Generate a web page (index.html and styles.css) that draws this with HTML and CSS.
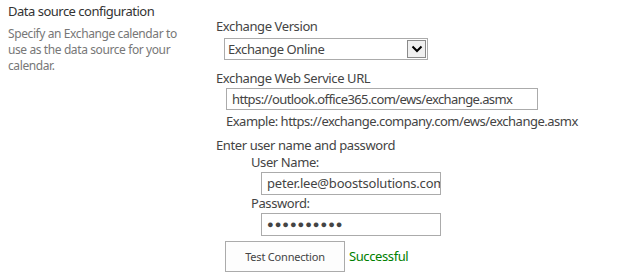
FILE: index.html
```html
<!DOCTYPE html>
<html lang="en">
<head>
  <meta charset="UTF-8" />
  <title>Data source configuration</title>
  <link rel="stylesheet" href="styles.css">
</head>
<body>
  <div class="section">
    <!-- Description column -->
    <div class="desc">
      <h3 class="desc-title">Data source configuration</h3>
      <div class="desc-text">Specify an Exchange calendar to use as the data source for your calendar.</div>
    </div>

    <!-- Settings column -->
    <div class="fields">
      <div class="label">Exchange Version</div>
      <div class="select-box">
        <span class="select-value">Exchange Online</span>
        <span class="select-arrow">
          <svg width="12" height="8" viewBox="0 0 12 8"><path d="M1.5 1.5 L6 6 L10.5 1.5" fill="none" stroke="#000" stroke-width="2"/></svg>
        </span>
      </div>

      <div class="label">Exchange Web Service URL</div>
      <div class="text-input url-input">https://outlook.office365.com/ews/exchange.asmx</div>
      <div class="hint">Example: https://exchange.company.com/ews/exchange.asmx</div>

      <div class="label">Enter user name and password</div>
      <div class="creds">
        <div class="sub-label">User Name:</div>
        <div class="text-input cred-input user">peter.lee@boostsolutions.com</div>
        <div class="sub-label">Password:</div>
        <div class="text-input cred-input dots">&#9679;&#9679;&#9679;&#9679;&#9679;&#9679;&#9679;&#9679;&#9679;&#9679;</div>
      </div>

      <div class="test-row">
        <button class="test-btn">Test Connection</button>
        <span class="status">Successful</span>
      </div>
    </div>
  </div>
</body>
</html>
```

FILE: styles.css
```css
body {
  margin: 0;
  background: #fff;
  font-family: 'Noto Sans', 'Open Sans', Arial, sans-serif;
  color: #444;
}
.section {
  display: flex;
}
.desc {
  width: 208px;
  padding: 3px 0 0 8px;
  box-sizing: border-box;
}
.desc-title {
  margin: 0;
  font-size: 13px;
  font-weight: normal;
  color: #333;
  line-height: 17px;
  letter-spacing: -0.5px;
}
.desc-text {
  margin-top: 6px;
  font-size: 12px;
  line-height: 16px;
  color: #777;
  letter-spacing: -0.4px;
  padding-right: 30px;
}
.fields {
  padding: 17px 0 0 8px;
}
.label {
  font-size: 13px;
  line-height: 18px;
  color: #444;
  letter-spacing: -0.4px;
}
.select-box {
  display: flex;
  align-items: center;
  width: 204px;
  height: 22px;
  margin: 3px 0 9px 8px;
  border: 1px solid #ababab;
  box-sizing: border-box;
}
.select-value {
  flex: 1;
  padding-left: 3px;
  font-size: 13px;
  color: #444;
  letter-spacing: -0.4px;
}
.select-arrow {
  display: flex;
  align-items: center;
  justify-content: center;
  width: 19px;
  height: 18px;
  margin-right: 1px;
  background: #f0f0f0;
  border: 1px solid #8a8a8a;
  box-sizing: border-box;
}
.text-input {
  height: 22px;
  border: 1px solid #ababab;
  box-sizing: border-box;
  font-size: 13px;
  line-height: 20px;
  padding-left: 5px;
  color: #444;
  white-space: nowrap;
  overflow: hidden;
  letter-spacing: -0.6px;
}
.url-input {
  width: 312px;
  margin: 1px 0 0 10px;
}
.hint {
  margin: 2px 0 6px 10px;
  font-size: 13px;
  line-height: 18px;
  color: #444;
  letter-spacing: -0.5px;
}
.creds {
  padding-left: 35px;
}
.sub-label {
  font-size: 13px;
  line-height: 17px;
  color: #444;
  letter-spacing: -0.4px;
}
.cred-input {
  width: 180px;
  height: 23px;
  margin: 1px 0 0 10px;
}
.user {
  letter-spacing: -0.2px;
}
.dots {
  font-size: 11px;
  letter-spacing: 1px;
  color: #444;
}
.test-row {
  display: flex;
  align-items: center;
  margin: 5px 0 0 9px;
}
.test-btn {
  width: 120px;
  height: 31px;
  background: #fdfdfd;
  border: 1px solid #ababab;
  font-family: inherit;
  font-size: 11px;
  color: #444;
  letter-spacing: -0.2px;
}
.status {
  margin: -2px 0 0 4px;
  font-size: 13px;
  color: #008000;
  letter-spacing: -0.4px;
}
```
